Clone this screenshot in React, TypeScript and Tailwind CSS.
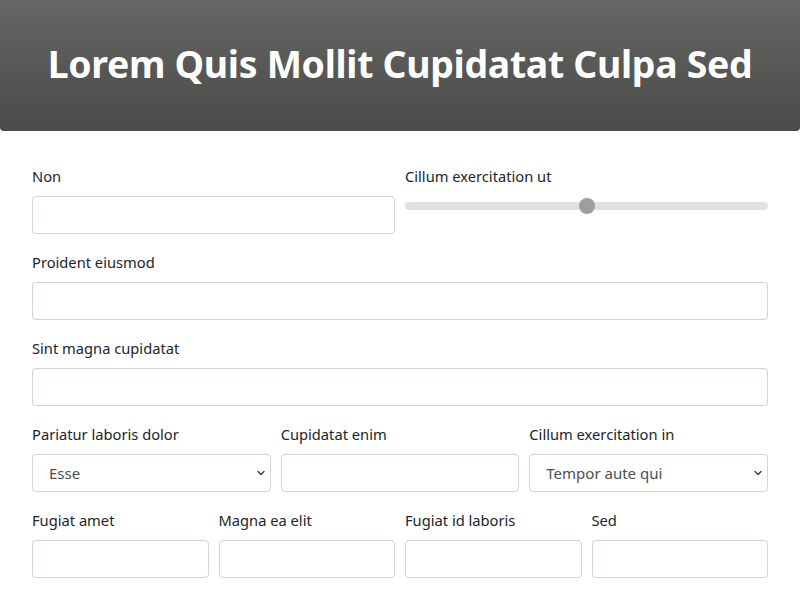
import React from "react";

const font = { fontFamily: '"Noto Sans", "Open Sans", sans-serif' };

function Label({ children }: { children: React.ReactNode }) {
  return <label className="block text-[14.7px] leading-6 text-[#212529] mb-2">{children}</label>;
}

function TextField({ label }: { label: string }) {
  return (
    <div className="flex flex-col min-w-0">
      <Label>{label}</Label>
      <input
        type="text"
        className="h-[38px] w-full rounded border border-[#ced4da] bg-white px-3 text-[15px] text-[#495057] outline-none"
      />
    </div>
  );
}

function SelectField({ label, value }: { label: string; value: string }) {
  return (
    <div className="flex flex-col min-w-0">
      <Label>{label}</Label>
      <div className="relative">
        <select
          defaultValue={value}
          className="h-[38px] w-full appearance-none rounded border border-[#ced4da] bg-white pl-4 pr-8 text-[15px] text-[#495057] outline-none"
        >
          <option>{value}</option>
        </select>
        <svg
          className="pointer-events-none absolute right-[6px] top-1/2 -translate-y-1/2"
          width="8"
          height="8"
          viewBox="0 0 16 16"
        >
          <path d="M2 5l6 6 6-6" fill="none" stroke="#343a40" strokeWidth="2.6" strokeLinecap="round" strokeLinejoin="round" />
        </svg>
      </div>
    </div>
  );
}

function SliderField({ label }: { label: string }) {
  return (
    <div className="flex flex-col min-w-0">
      <Label>{label}</Label>
      <div className="relative h-4 mt-[2px]">
        <div className="absolute inset-x-0 top-1/2 h-2 -translate-y-1/2 rounded-full bg-[#dee2e6]" />
        <div className="absolute left-1/2 top-1/2 h-4 w-4 -translate-x-1/2 -translate-y-1/2 rounded-full bg-[#9e9e9e]" />
      </div>
    </div>
  );
}

export default function App() {
  return (
    <div className="w-[800px] h-[600px] overflow-hidden bg-white" style={font}>
      <header className="h-[131px] flex items-center justify-center pb-[3px] rounded-b bg-gradient-to-b from-[#666665] to-[#4a4a49]">
        <h1 className="text-[37.4px] font-bold text-white tracking-[-0.3px]">Lorem Quis Mollit Cupidatat Culpa Sed</h1>
      </header>

      <form className="px-8 pt-[33px] flex flex-col gap-4">
        <div className="grid grid-cols-2 gap-[10px]">
          <TextField label="Non" />
          <SliderField label="Cillum exercitation ut" />
        </div>
        <TextField label="Proident eiusmod" />
        <TextField label="Sint magna cupidatat" />
        <div className="grid grid-cols-3 gap-[10px]">
          <SelectField label="Pariatur laboris dolor" value="Esse" />
          <TextField label="Cupidatat enim" />
          <SelectField label="Cillum exercitation in" value="Tempor aute qui" />
        </div>
        <div className="grid grid-cols-4 gap-[10px]">
          <TextField label="Fugiat amet" />
          <TextField label="Magna ea elit" />
          <TextField label="Fugiat id laboris" />
          <TextField label="Sed" />
        </div>
      </form>
    </div>
  );
}
